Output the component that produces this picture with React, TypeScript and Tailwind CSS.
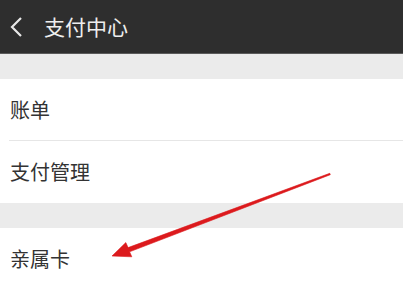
import React from "react";

const font = { fontFamily: '"Noto Sans CJK SC", "Noto Sans", sans-serif' };

function Row({ label, divider = false }: { label: string; divider?: boolean }) {
  return (
    <div className="bg-white">
      <div className={`ml-[9px] flex h-[62px] items-center pl-px ${divider ? "border-b border-[#e6e6e6]" : ""}`}>
        <span className="text-[20px] leading-none text-[#333333]">{label}</span>
      </div>
    </div>
  );
}

export default function App() {
  return (
    <div className="relative h-[288px] w-[403px] overflow-hidden bg-[#ebebeb]" style={font}>
      <header className="flex h-[54px] items-center border-b border-[#5a5a5a] bg-[#2e2e2e]">
        <svg width="14" height="22" viewBox="0 0 14 22" className="ml-[9px]">
          <path d="M12 2 L3 11 L12 20" fill="none" stroke="#e8e8e8" strokeWidth="2.2" />
        </svg>
        <span className="ml-[21px] text-[21px] leading-none text-[#eeeeee]">支付中心</span>
      </header>
      <div className="h-[25px]" />
      <Row label="账单" divider />
      <Row label="支付管理" />
      <div className="h-[25px]" />
      <Row label="亲属卡" />
      {/* annotation arrow */}
      <svg className="absolute left-0 top-0" width="403" height="288" viewBox="0 0 403 288">
        <path
          d="M112 256 L125.8 242.6 L128.1 247.6 L329.8 173.3 L330.3 174.7 L129.6 251.8 L131.8 256.8 Z"
          fill="#dc1a1d"
          stroke="#dc1a1d"
          strokeWidth="0.6"
          strokeLinejoin="round"
        />
      </svg>
    </div>
  );
}
